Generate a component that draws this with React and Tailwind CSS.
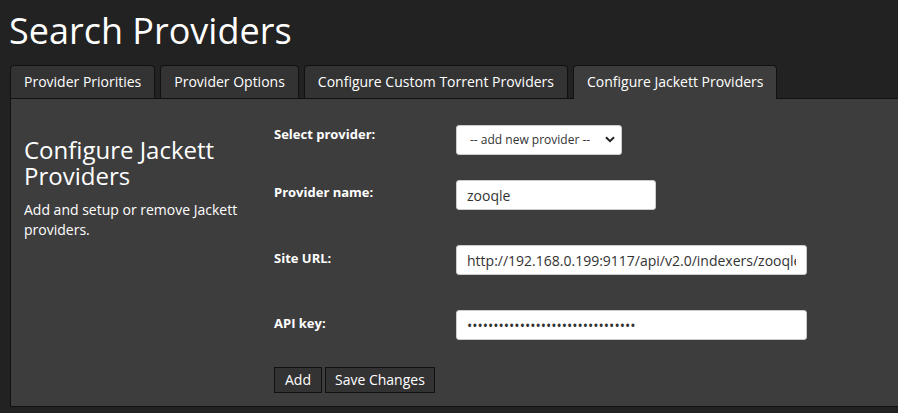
import React from "react";

const tabs = [
  { label: "Provider Priorities" },
  { label: "Provider Options" },
  { label: "Configure Custom Torrent Providers" },
  { label: "Configure Jackett Providers", active: true },
];

export default function App() {
  return (
    <div className="min-h-[413px] w-full overflow-hidden bg-[#222222] font-['Open_Sans',sans-serif] text-white">
      <h1 className="pl-[9px] pt-[13px] text-[36px] font-normal leading-[36px]">Search Providers</h1>

      <div className="mt-[16px] pl-[10px]">
        <ul className="flex items-end gap-[5px]">
          {tabs.map((t) =>
            t.active ? (
              <li
                key={t.label}
                className="relative z-10 -mb-px flex h-[34px] items-center rounded-t-[4px] border border-b-0 border-[#111111] bg-[#3d3d3d] px-[13px] pb-px text-[14px] leading-[20px]"
              >
                {t.label}
              </li>
            ) : (
              <li
                key={t.label}
                className="flex h-[33px] items-center rounded-t-[4px] border border-b-0 border-[#111111] bg-[#333333] px-[13px] text-[14px] leading-[20px]"
              >
                {t.label}
              </li>
            )
          )}
        </ul>

        <div className="flex border border-r-0 border-[#111111] bg-[#3d3d3d] pb-[13px] pl-[13px] pt-[26px]">
          <div className="w-[232px] shrink-0 pt-[12px]">
            <h3 className="text-[24px] font-normal leading-[26px]">Configure Jackett Providers</h3>
            <p className="mt-[11px] text-[14px] leading-[20px]">Add and setup or remove Jackett providers.</p>
          </div>

          <div className="ml-[18px] flex flex-col">
            <div className="flex items-start">
              <label className="w-[182px] shrink-0 text-[13px] font-bold leading-[18px]">Select provider:</label>
              <div className="relative h-[30px] w-[166px]">
                <select className="h-full w-full appearance-none rounded-[3px] border border-[#cccccc] bg-white pl-[13px] font-['Open_Sans',sans-serif] text-[12px] text-[#333333] outline-none">
                  <option>-- add new provider --</option>
                </select>
                <svg className="pointer-events-none absolute right-[7px] top-[11px]" width="10" height="7" viewBox="0 0 10 7">
                  <path d="M1 1.2 L5 5.2 L9 1.2" fill="none" stroke="#222" strokeWidth="2" />
                </svg>
              </div>
            </div>

            <div className="mt-[25px] flex items-start">
              <label className="w-[182px] shrink-0 pt-[3px] text-[13px] font-bold leading-[18px]">Provider name:</label>
              <input
                readOnly
                value="zooqle"
                className="h-[30px] w-[200px] rounded-[3px] border border-[#cccccc] bg-white px-[10px] text-[14px] text-[#333333] outline-none"
              />
            </div>

            <div className="mt-[35px] flex items-start">
              <label className="w-[182px] shrink-0 pt-[4px] text-[13px] font-bold leading-[18px]">Site URL:</label>
              <input
                readOnly
                value="http://192.168.0.199:9117/api/v2.0/indexers/zooqle/results/torznab/"
                className="h-[30px] w-[351px] rounded-[3px] border border-[#cccccc] bg-white px-[10px] text-[14px] text-[#333333] outline-none"
              />
            </div>

            <div className="mt-[35px] flex items-start">
              <label className="w-[182px] shrink-0 pt-[4px] text-[13px] font-bold leading-[18px]">API key:</label>
              <input
                readOnly
                type="password"
                value="abcdefghijklmnopqrstuvwxyz123456"
                className="h-[30px] w-[351px] rounded-[3px] border border-[#cccccc] bg-white px-[10px] text-[14px] text-[#333333] outline-none"
              />
            </div>

            <div className="mt-[27px] flex gap-[3px]">
              <button className="h-[26px] border border-[#111111] bg-[#333333] px-[10px] text-[14px] leading-[20px] text-white">Add</button>
              <button className="h-[26px] border border-[#111111] bg-[#333333] px-[9px] text-[14px] leading-[20px] text-white">Save Changes</button>
            </div>
          </div>
        </div>
      </div>
    </div>
  );
}
